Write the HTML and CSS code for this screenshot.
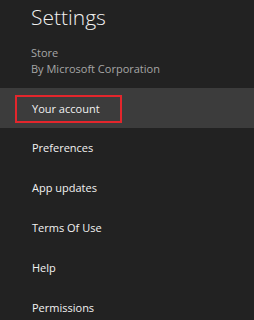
FILE: index.html
```html
<!DOCTYPE html>
<html lang="en">
<head>
    <meta charset="UTF-8">
    <meta name="viewport" content="width=device-width, initial-scale=1.0">
    <title>Settings</title>
    <link rel="stylesheet" href="styles.css">
</head>
<body>
    <div class="pane">
        <header class="pane-header">
            <h1>Settings</h1>
            <p class="app-name">Store</p>
            <p class="publisher">By Microsoft Corporation</p>
        </header>
        <ul class="menu">
            <li class="menu-item selected"><span class="highlight">Your account</span></li>
            <li class="menu-item">Preferences</li>
            <li class="menu-item">App updates</li>
            <li class="menu-item">Terms Of Use</li>
            <li class="menu-item">Help</li>
            <li class="menu-item">Permissions</li>
        </ul>
    </div>
</body>
</html>
```

FILE: styles.css
```css
:root {
    --pane-bg: #222222;
    --selected-bg: #3c3c3c;
    --text-color: #f2f2f2;
    --muted-color: #a6a6a6;
    --mark-color: #e3262c;
}

* {
    box-sizing: border-box;
    margin: 0;
    padding: 0;
    font-family: 'Open Sans', 'Noto Sans', sans-serif;
}

body {
    background-color: var(--pane-bg);
    width: 254px;
    height: 320px;
    overflow: hidden;
}

.pane {
    color: var(--text-color);
}

.pane-header {
    padding: 2px 0 0 31px;
    height: 88px;
}

h1 {
    font-size: 21px;
    font-weight: 300;
    line-height: 30px;
    margin-bottom: 13px;
}

.app-name,
.publisher {
    color: var(--muted-color);
    font-size: 11px;
    line-height: 16px;
}

.menu {
    list-style: none;
}

.menu-item {
    height: 40px;
    line-height: 40px;
    padding-left: 32px;
    font-size: 11px;
}

.selected {
    background-color: var(--selected-bg);
    padding-left: 15px;
    display: flex;
    align-items: center;
}

.highlight {
    display: block;
    width: 107px;
    height: 28px;
    line-height: 24px;
    padding-left: 15px;
    border: 2px solid var(--mark-color);
    margin-top: 1px;
}
```
